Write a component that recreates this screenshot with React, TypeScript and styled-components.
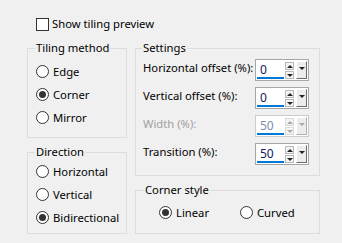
import React from 'react';
import styled, { createGlobalStyle } from 'styled-components';

const GlobalStyle = createGlobalStyle`
  html, body {
    margin: 0;
    padding: 0;
    background: #f0f0f0;
  }
  body {
    font-family: "Noto Sans", "Open Sans", sans-serif;
    font-size: 11.25px;
    color: #000;
  }
`;

const Window = styled.div`
  width: 342px;
  height: 243px;
  box-sizing: border-box;
  padding: 17px 0 0 27px;
  background: #f0f0f0;
`;

const CheckRow = styled.label`
  display: flex;
  align-items: center;
  gap: 3px;
  margin-left: 9px;
  height: 14px;
  line-height: 14px;
`;

const CheckBox = styled.span`
  width: 11px;
  height: 11px;
  border: 1px solid #333;
  background: #fff;
`;

const Columns = styled.div`
  display: flex;
  gap: 8px;
  margin-top: 9px;
`;

const Column = styled.div<{ $width: number; $gap: number }>`
  display: flex;
  flex-direction: column;
  gap: ${(p) => p.$gap}px;
  width: ${(p) => p.$width}px;
`;

const Group = styled.fieldset<{ $h: number; $pt: number; $pl?: number; $pr?: number }>`
  box-sizing: border-box;
  margin: 0;
  min-width: 0;
  height: ${(p) => p.$h}px;
  border: 1px solid #dcdcdc;
  padding: ${(p) => p.$pt}px ${(p) => p.$pr ?? 6}px 0 ${(p) => p.$pl ?? 8}px;
`;

const Legend = styled.legend`
  padding: 0 1px;
  margin-left: -1px;
  line-height: 16px;
`;

const RadioList = styled.div`
  display: flex;
  flex-direction: column;
`;

const RadioRow = styled.label<{ $w?: number }>`
  display: flex;
  align-items: center;
  gap: 4px;
  height: 23px;
  white-space: nowrap;
  ${(p) => (p.$w ? `width: ${p.$w}px;` : '')}
`;

const RadioCircle = styled.span<{ $on?: boolean }>`
  box-sizing: border-box;
  width: 13px;
  height: 13px;
  border-radius: 50%;
  border: 1px solid #333;
  background: #fff;
  display: flex;
  align-items: center;
  justify-content: center;
  &::after {
    content: '';
    display: ${(p) => (p.$on ? 'block' : 'none')};
    width: 7px;
    height: 7px;
    border-radius: 50%;
    background: #333;
  }
`;

const SettingsList = styled.div`
  display: flex;
  flex-direction: column;
  gap: 6px;
`;

const SettingRow = styled.div`
  display: flex;
  align-items: flex-start;
  justify-content: space-between;
  height: 22px;
`;

const SettingLabel = styled.span<{ $disabled?: boolean }>`
  line-height: 16px;
  margin-top: 1px;
  white-space: nowrap;
  color: ${(p) => (p.$disabled ? '#a0a0a0' : '#000')};
`;

const Spinner = styled.div<{ $disabled?: boolean }>`
  box-sizing: border-box;
  display: flex;
  align-items: stretch;
  width: 54px;
  height: 22px;
  padding: 1px;
  border: 1px solid ${(p) => (p.$disabled ? '#cccccc' : '#a6a6a6')};
  background: #fff;
`;

const SpinValue = styled.div<{ $disabled?: boolean }>`
  box-sizing: border-box;
  width: 28px;
  padding-left: 3px;
  display: flex;
  align-items: center;
  border-bottom: 2px solid #0078d7;
  color: ${(p) => (p.$disabled ? '#7a8fb0' : '#10205a')};
  font-size: 12px;
`;

const SpinArrows = styled.div`
  display: flex;
  flex-direction: column;
  gap: 1px;
  margin-left: 1px;
  width: 10px;
  padding-top: 1px;
`;

const ArrowBox = styled.div<{ $down?: boolean; $disabled?: boolean }>`
  box-sizing: border-box;
  height: 8px;
  border: 1px solid ${(p) => (p.$disabled ? '#dadada' : '#b8b8b8')};
  background: #f4f4f4;
  display: flex;
  align-items: center;
  justify-content: center;
  &::after {
    content: '';
    border-left: 3px solid transparent;
    border-right: 3px solid transparent;
    ${(p) => (p.$down ? 'border-top' : 'border-bottom')}: 3px solid ${(p) => (p.$disabled ? '#a8a8a8' : '#222')};
  }
`;

const DropButton = styled.div<{ $disabled?: boolean }>`
  box-sizing: border-box;
  width: 11px;
  margin-left: 2px;
  border-top: 1px solid #fff;
  border-left: 1px solid #fff;
  border-right: 1px solid ${(p) => (p.$disabled ? '#b0b0b0' : '#6a6a6a')};
  border-bottom: 1px solid ${(p) => (p.$disabled ? '#b0b0b0' : '#6a6a6a')};
  background: #ececec;
  display: flex;
  align-items: center;
  justify-content: center;
  &::after {
    content: '';
    margin-top: -4px;
    border-left: 3px solid transparent;
    border-right: 3px solid transparent;
    border-top: 3px solid ${(p) => (p.$disabled ? '#a8a8a8' : '#222')};
  }
`;

const CornerRow = styled.div`
  display: flex;
  padding-left: 14px;
`;

type Setting = { label: string; value: string; disabled?: boolean };

const settings: Setting[] = [
  { label: 'Horizontal offset (%):', value: '0' },
  { label: 'Vertical offset (%):', value: '0' },
  { label: 'Width (%):', value: '50', disabled: true },
  { label: 'Transition (%):', value: '50' },
];

const Radio: React.FC<{ label: string; on?: boolean; width?: number }> = ({ label, on, width }) => (
  <RadioRow $w={width}>
    <RadioCircle $on={on} />
    {label}
  </RadioRow>
);

const SpinInput: React.FC<{ value: string; disabled?: boolean }> = ({ value, disabled }) => (
  <Spinner $disabled={disabled}>
    <SpinValue $disabled={disabled}>{value}</SpinValue>
    <SpinArrows>
      <ArrowBox $disabled={disabled} />
      <ArrowBox $down $disabled={disabled} />
    </SpinArrows>
    <DropButton $disabled={disabled} />
  </Spinner>
);

const App: React.FC = () => {
  return (
    <>
      <GlobalStyle />
      <Window>
        <CheckRow>
          <CheckBox />
          Show tiling preview
        </CheckRow>
        <Columns>
          <Column $width={100} $gap={6}>
            <Group $h={98} $pt={4}>
              <Legend>Tiling method</Legend>
              <RadioList>
                <Radio label="Edge" />
                <Radio label="Corner" on />
                <Radio label="Mirror" />
              </RadioList>
            </Group>
            <Group $h={90} $pt={0}>
              <Legend>Direction</Legend>
              <RadioList>
                <Radio label="Horizontal" />
                <Radio label="Vertical" />
                <Radio label="Bidirectional" on />
              </RadioList>
            </Group>
          </Column>
          <Column $width={185} $gap={6}>
            <Group $h={136} $pt={3} $pl={7} $pr={10}>
              <Legend>Settings</Legend>
              <SettingsList>
                {settings.map((s) => (
                  <SettingRow key={s.label}>
                    <SettingLabel $disabled={s.disabled}>{s.label}</SettingLabel>
                    <SpinInput value={s.value} disabled={s.disabled} />
                  </SettingRow>
                ))}
              </SettingsList>
            </Group>
            <Group $h={52} $pt={3} $pl={9}>
              <Legend>Corner style</Legend>
              <CornerRow>
                <Radio label="Linear" on width={81} />
                <Radio label="Curved" />
              </CornerRow>
            </Group>
          </Column>
        </Columns>
      </Window>
    </>
  );
};

export default App;
